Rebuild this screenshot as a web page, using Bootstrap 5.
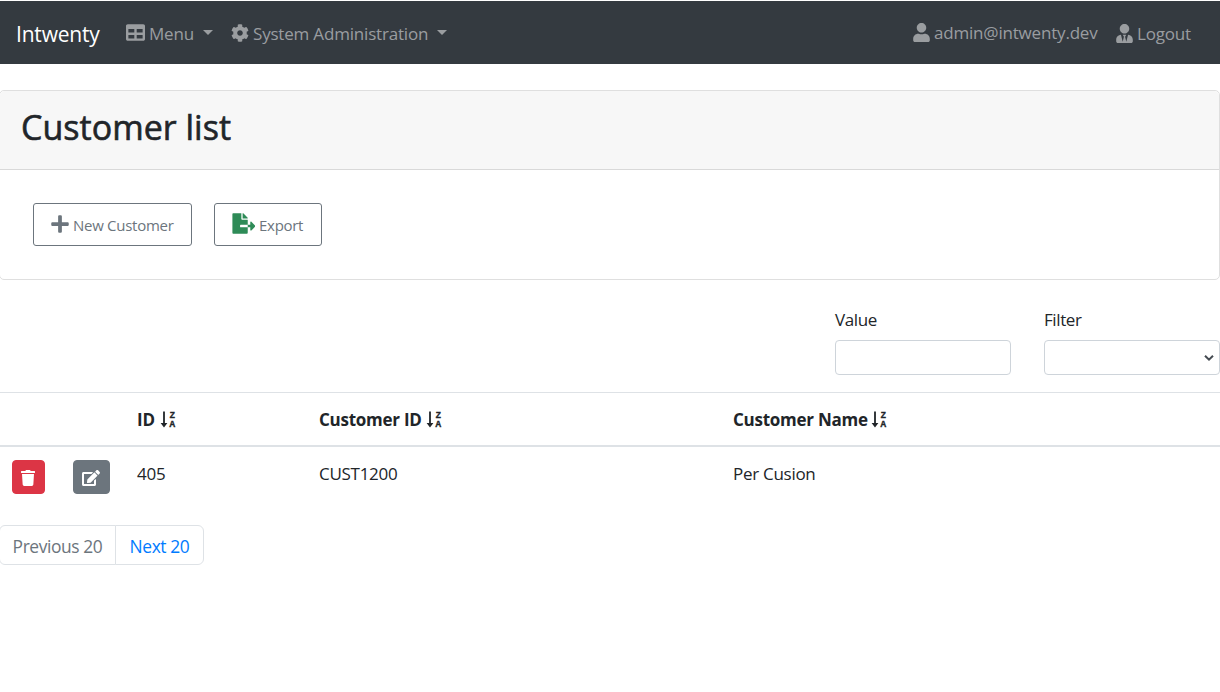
<!DOCTYPE html>
<html lang="en">
<head>
<meta charset="utf-8">
<meta name="viewport" content="width=device-width, initial-scale=1">
<title>Customer list</title>
<link href="https://cdn.jsdelivr.net/npm/bootstrap@5.3.0/dist/css/bootstrap.min.css" rel="stylesheet">
<style>
body{font-family:"Open Sans","Noto Sans",sans-serif;font-size:17px;letter-spacing:-.4px;line-height:26px;color:#212529;background:#fff;overflow:hidden}
svg{display:block;flex:none;fill:currentColor}
.topbar{height:63px;margin-top:1px;padding:0 28px 0 16px;background:#343a40;flex-wrap:nowrap}
.topbar .navbar-brand{font-size:21px;letter-spacing:-.2px;width:84px;margin:0 26px 0 0;padding:2px 0 0;color:#fff;line-height:30px;white-space:nowrap}
.topbar .nav-link{display:flex;align-items:center;padding:0;color:#9a9da0;white-space:nowrap;letter-spacing:-.19px}
.topbar .nav-link:hover{color:#c2c4c6}
.topbar .nav-link span{padding-top:2px}
.topbar .dropdown-toggle::after{margin-left:9px;border-top:5px solid;border-right:5px solid transparent;border-left:5px solid transparent;vertical-align:0}
.w-menu{width:45px}.w-admin{width:175px}.w-mail{width:164px}.w-out{width:55px}
.panel{margin:26px 0 0 -1px;height:190px;border:1px solid #dfdfdf;border-radius:5px}
.panel .card-header{height:79px;padding:15px 21px;background:#f7f7f7;border-bottom:1px solid #d9d9d9}
.panel h1{font-size:34px;font-weight:500;line-height:42px;letter-spacing:.02px;margin:0;-webkit-text-stroke:.6px currentColor}
.panel .card-body{padding:33px 33px;gap:22px}
.panel .btn{height:43px;padding:0 17px;border-radius:3px;font-size:15px;letter-spacing:-.28px;color:#6c757d;border-color:#6c757d;white-space:nowrap;background:#fff}
.panel .btn span{padding-top:2px}
.panel .btn svg{margin-top:-2px}
.c-green{color:#2e8b57}
.filters{gap:33px;margin-top:27px}
.filters>div{width:176px}
.filters label{display:block;margin-bottom:7px}
.filters .form-control,.filters .form-select{height:35px;border:1px solid #ced4da;border-radius:4px;padding:0 10px}
.filters .form-select{background-image:url("data:image/svg+xml,%3Csvg xmlns='http://www.w3.org/2000/svg' viewBox='0 0 10 8'%3E%3Cpath d='M1 1.7l4 4 4-4' fill='none' stroke='%23454b52' stroke-width='2'/%3E%3C/svg%3E");background-size:10px 8px;background-position:right 5px center}
.grid-table{table-layout:fixed;margin:17px 0 0;color:#212529}
.grid-table th{height:53px;padding:2px 13px 0;vertical-align:middle;border-top:1px solid #dee2e6;border-bottom:2px solid #dee2e6;white-space:nowrap;font-weight:700;letter-spacing:-.25px}
.grid-table td{height:61px;padding:14px 13px 0;border:0;vertical-align:top;letter-spacing:-.28px}
.grid-table td:first-child,.grid-table td:nth-child(2){padding:13px 0 0 12px}
.act{height:34px;padding:0;border-radius:4px;display:flex;align-items:center;justify-content:center}
.act svg{margin:2px 1px 0 0}
.pager{margin:18px 0 0 -1px}
.pager .page-link{height:40px;padding:7px 0 0;text-align:center;font-size:17.4px;letter-spacing:-.4px;color:#007bff;border-color:#dee2e6;line-height:26px;white-space:nowrap}
.pager .disabled .page-link{color:#6c757d;background:#fff}
.pager .p-prev{width:117px}.pager .p-next{width:89px}
.sorter text{font:700 8.4px "Liberation Sans",sans-serif;letter-spacing:0;stroke:currentColor;stroke-width:.4px}
</style>
</head>
<body>
<nav class="navbar topbar d-flex align-items-center justify-content-start">
  <a class="navbar-brand" href="#">Intwenty</a>
  <a class="nav-link dropdown-toggle" href="#"><svg class="me-1" width="19" height="19" viewBox="0 0 512 512"><path d="M464 32H48C21.490 32 0 53.490 0 80v352c0 26.510 21.490 48 48 48h416c26.510 0 48-21.490 48-48V80c0-26.510-21.490-48-48-48zM224 416H64v-96h160v96zm0-160H64v-96h160v96zm224 160H288v-96h160v96zm0-160H288v-96h160v96z"/></svg><span class="w-menu">Menu</span></a>
  <a class="nav-link dropdown-toggle" href="#" style="margin-left:18px"><svg class="me-1" width="18" height="18" viewBox="0 0 512 512"><path d="M487.400 315.700l-42.600-24.600c4.300-23.200 4.300-47 0-70.200l42.600-24.600c4.900-2.800 7.100-8.600 5.500-14-11.100-35.600-30-67.800-54.700-94.600-3.800-4.100-10-5.100-14.800-2.300L380.800 110c-17.900-15.400-38.500-27.300-60.800-35.100V25.800c0-5.600-3.900-10.500-9.400-11.700-36.700-8.200-74.300-7.800-109.200 0-5.500 1.200-9.400 6.100-9.400 11.700V75c-22.200 7.900-42.800 19.800-60.800 35.100L88.700 85.500c-4.900-2.800-11-1.900-14.800 2.300-24.700 26.700-43.600 58.900-54.700 94.600-1.700 5.400.6 11.200 5.500 14L67.300 221c-4.300 23.200-4.300 47 0 70.200l-42.600 24.600c-4.900 2.800-7.100 8.600-5.500 14 11.100 35.600 30 67.800 54.700 94.600 3.800 4.100 10 5.100 14.800 2.300l42.600-24.600c17.900 15.400 38.500 27.300 60.800 35.100v49.200c0 5.600 3.900 10.500 9.400 11.700 36.700 8.200 74.300 7.800 109.200 0 5.500-1.200 9.400-6.100 9.400-11.700v-49.200c22.200-7.900 42.800-19.800 60.800-35.100l42.600 24.600c4.900 2.800 11 1.900 14.800-2.300 24.700-26.700 43.600-58.900 54.700-94.600 1.500-5.500-.7-11.300-5.600-14.100zM256 336c-44.100 0-80-35.900-80-80s35.900-80 80-80 80 35.900 80 80-35.900 80-80 80z"/></svg><span class="w-admin">System Administration</span></a>
  <a class="nav-link ms-auto" href="#"><svg class="me-1" width="17" height="19" viewBox="0 0 448 512"><path d="M224 256c70.700 0 128-57.300 128-128S294.700 0 224 0 96 57.300 96 128s57.300 128 128 128zm89.600 32h-16.700c-22.200 10.200-46.900 16-72.900 16s-50.600-5.800-72.900-16h-16.700C60.200 288 0 348.200 0 422.400V464c0 26.500 21.500 48 48 48h352c26.500 0 48-21.500 48-48v-41.600c0-74.200-60.200-134.400-134.400-134.400z"/></svg><span class="w-mail pt-0">admin@intwenty.dev</span></a>
  <a class="nav-link" href="#" style="margin-left:18px"><svg class="me-1" style="margin-top:1px" width="17" height="19" viewBox="0 0 448 512"><path d="M224 256c70.700 0 128-57.300 128-128S294.700 0 224 0 96 57.300 96 128s57.300 128 128 128zm95.800 32.600L272 480l-32-136 32-56h-96l32 56-32 136-47.800-191.400C56.900 292 0 350.300 0 422.400V464c0 26.500 21.500 48 48 48h352c26.500 0 48-21.500 48-48v-41.600c0-72.100-56.900-130.400-128.200-133.800z"/></svg><span class="w-out">Logout</span></a>
</nav>

<section class="card panel">
  <div class="card-header"><h1>Customer list</h1></div>
  <div class="card-body d-flex align-items-start">
    <button class="btn btn-outline-secondary d-flex align-items-center" style="width:159px"><svg width="18" height="20" viewBox="0 0 448 512" class="me-1"><path d="M416 208H272V64c0-17.670-14.330-32-32-32h-32c-17.670 0-32 14.330-32 32v144H32c-17.670 0-32 14.330-32 32v32c0 17.670 14.330 32 32 32h144v144c0 17.670 14.330 32 32 32h32c17.670 0 32-14.330 32-32V304h144c17.670 0 32-14.330 32-32v-32c0-17.670-14.330-32-32-32z"/></svg><span>New Customer</span></button>
    <button class="btn btn-outline-secondary d-flex align-items-center" style="width:108px"><svg width="23" height="21" viewBox="-10 0 576 512" class="me-1 c-green"><path d="M384 121.900c0-6.300-2.500-12.400-7-16.900L279.100 7c-4.500-4.500-10.600-7-17-7H256v128h128zM571 308l-95.700-96.400c-10.100-10.100-27.400-3-27.400 11.300V288h-64v64h64v65.200c0 14.300 17.300 21.400 27.400 11.300L571 332c6.600-6.600 6.600-17.400 0-24zm-379 28v-32c0-8.800 7.200-16 16-16h176V160H248c-13.200 0-24-10.800-24-24V0H24C10.700 0 0 10.700 0 24v464c0 13.300 10.700 24 24 24h336c13.300 0 24-10.700 24-24V352H208c-8.800 0-16-7.200-16-16z"/></svg><span>Export</span></button>
  </div>
</section>

<form class="d-flex justify-content-end filters">
  <div><label for="val">Value</label><input id="val" class="form-control" type="text"></div>
  <div><label for="fil">Filter</label><select id="fil" class="form-select"><option></option></select></div>
</form>

<table class="table grid-table">
  <colgroup><col style="width:61px"><col style="width:63px"><col style="width:182px"><col style="width:414px"><col></colgroup>
  <thead><tr>
    <th></th><th></th>
    <th><div class="d-flex align-items-center"><span style="width:23px">ID</span><svg class="sorter" width="17" height="22" viewBox="0 0 17 22"><path d="M3.100 2.500h1.800v11.500h2.500L4 18.500.6 14h2.500z"/><text x="9.700" y="8.500">Z</text><text x="9.300" y="18.300">A</text></svg></div></th>
    <th><div class="d-flex align-items-center"><span style="width:107px">Customer ID</span><svg class="sorter" width="17" height="22" viewBox="0 0 17 22"><path d="M3.100 2.500h1.800v11.500h2.500L4 18.500.6 14h2.500z"/><text x="9.700" y="8.500">Z</text><text x="9.300" y="18.300">A</text></svg></div></th>
    <th><div class="d-flex align-items-center"><span style="width:138px">Customer Name</span><svg class="sorter" width="17" height="22" viewBox="0 0 17 22"><path d="M3.100 2.500h1.800v11.500h2.500L4 18.500.6 14h2.500z"/><text x="9.700" y="8.500">Z</text><text x="9.300" y="18.300">A</text></svg></div></th>
  </tr></thead>
  <tbody><tr>
    <td><button class="btn btn-danger act" style="width:33px" aria-label="Delete"><svg width="14" height="16" viewBox="0 0 448 512"><path d="M432 32H312l-9.400-18.700A24 24 0 0 0 281.100 0H166.800a23.720 23.720 0 0 0-21.400 13.300L136 32H16A16 16 0 0 0 0 48v32a16 16 0 0 0 16 16h416a16 16 0 0 0 16-16V48a16 16 0 0 0-16-16zM53.200 467a48 48 0 0 0 47.900 45h245.800a48 48 0 0 0 47.900-45L416 128H32z"/></svg></button></td>
    <td><button class="btn btn-secondary act" style="width:37px" aria-label="Edit"><svg width="18" height="16" viewBox="0 0 576 512"><path d="M402.600 83.200l90.200 90.200c3.800 3.800 3.800 10 0 13.800L274.400 405.600l-92.800 10.300c-12.400 1.400-22.900-9.100-21.500-21.500l10.300-92.800L388.800 83.200c3.800-3.800 10-3.800 13.800 0zm162-22.900l-48.800-48.800c-15.200-15.200-39.900-15.200-55.200 0l-35.400 35.400c-3.800 3.800-3.800 10 0 13.800l90.200 90.200c3.800 3.800 10 3.800 13.800 0l35.400-35.400c15.200-15.300 15.200-40 0-55.200zM384 346.200V448H64V128h229.800c3.200 0 6.200-1.300 8.500-3.500l40-40c7.600-7.600 2.200-20.500-8.500-20.500H48C21.500 64 0 85.500 0 112v352c0 26.500 21.500 48 48 48h352c26.500 0 48-21.500 48-48V306.200c0-10.700-12.900-16-20.500-8.500l-40 40c-2.200 2.300-3.500 5.300-3.500 8.500z"/></svg></button></td>
    <td>405</td><td>CUST1200</td><td>Per Cusion</td>
  </tr></tbody>
</table>

<ul class="pagination pager">
  <li class="page-item disabled"><a class="page-link p-prev">Previous 20</a></li>
  <li class="page-item"><a class="page-link p-next" href="#">Next 20</a></li>
</ul>
<script src="https://cdn.jsdelivr.net/npm/bootstrap@5.3.0/dist/js/bootstrap.bundle.min.js"></script>
</body>
</html>
